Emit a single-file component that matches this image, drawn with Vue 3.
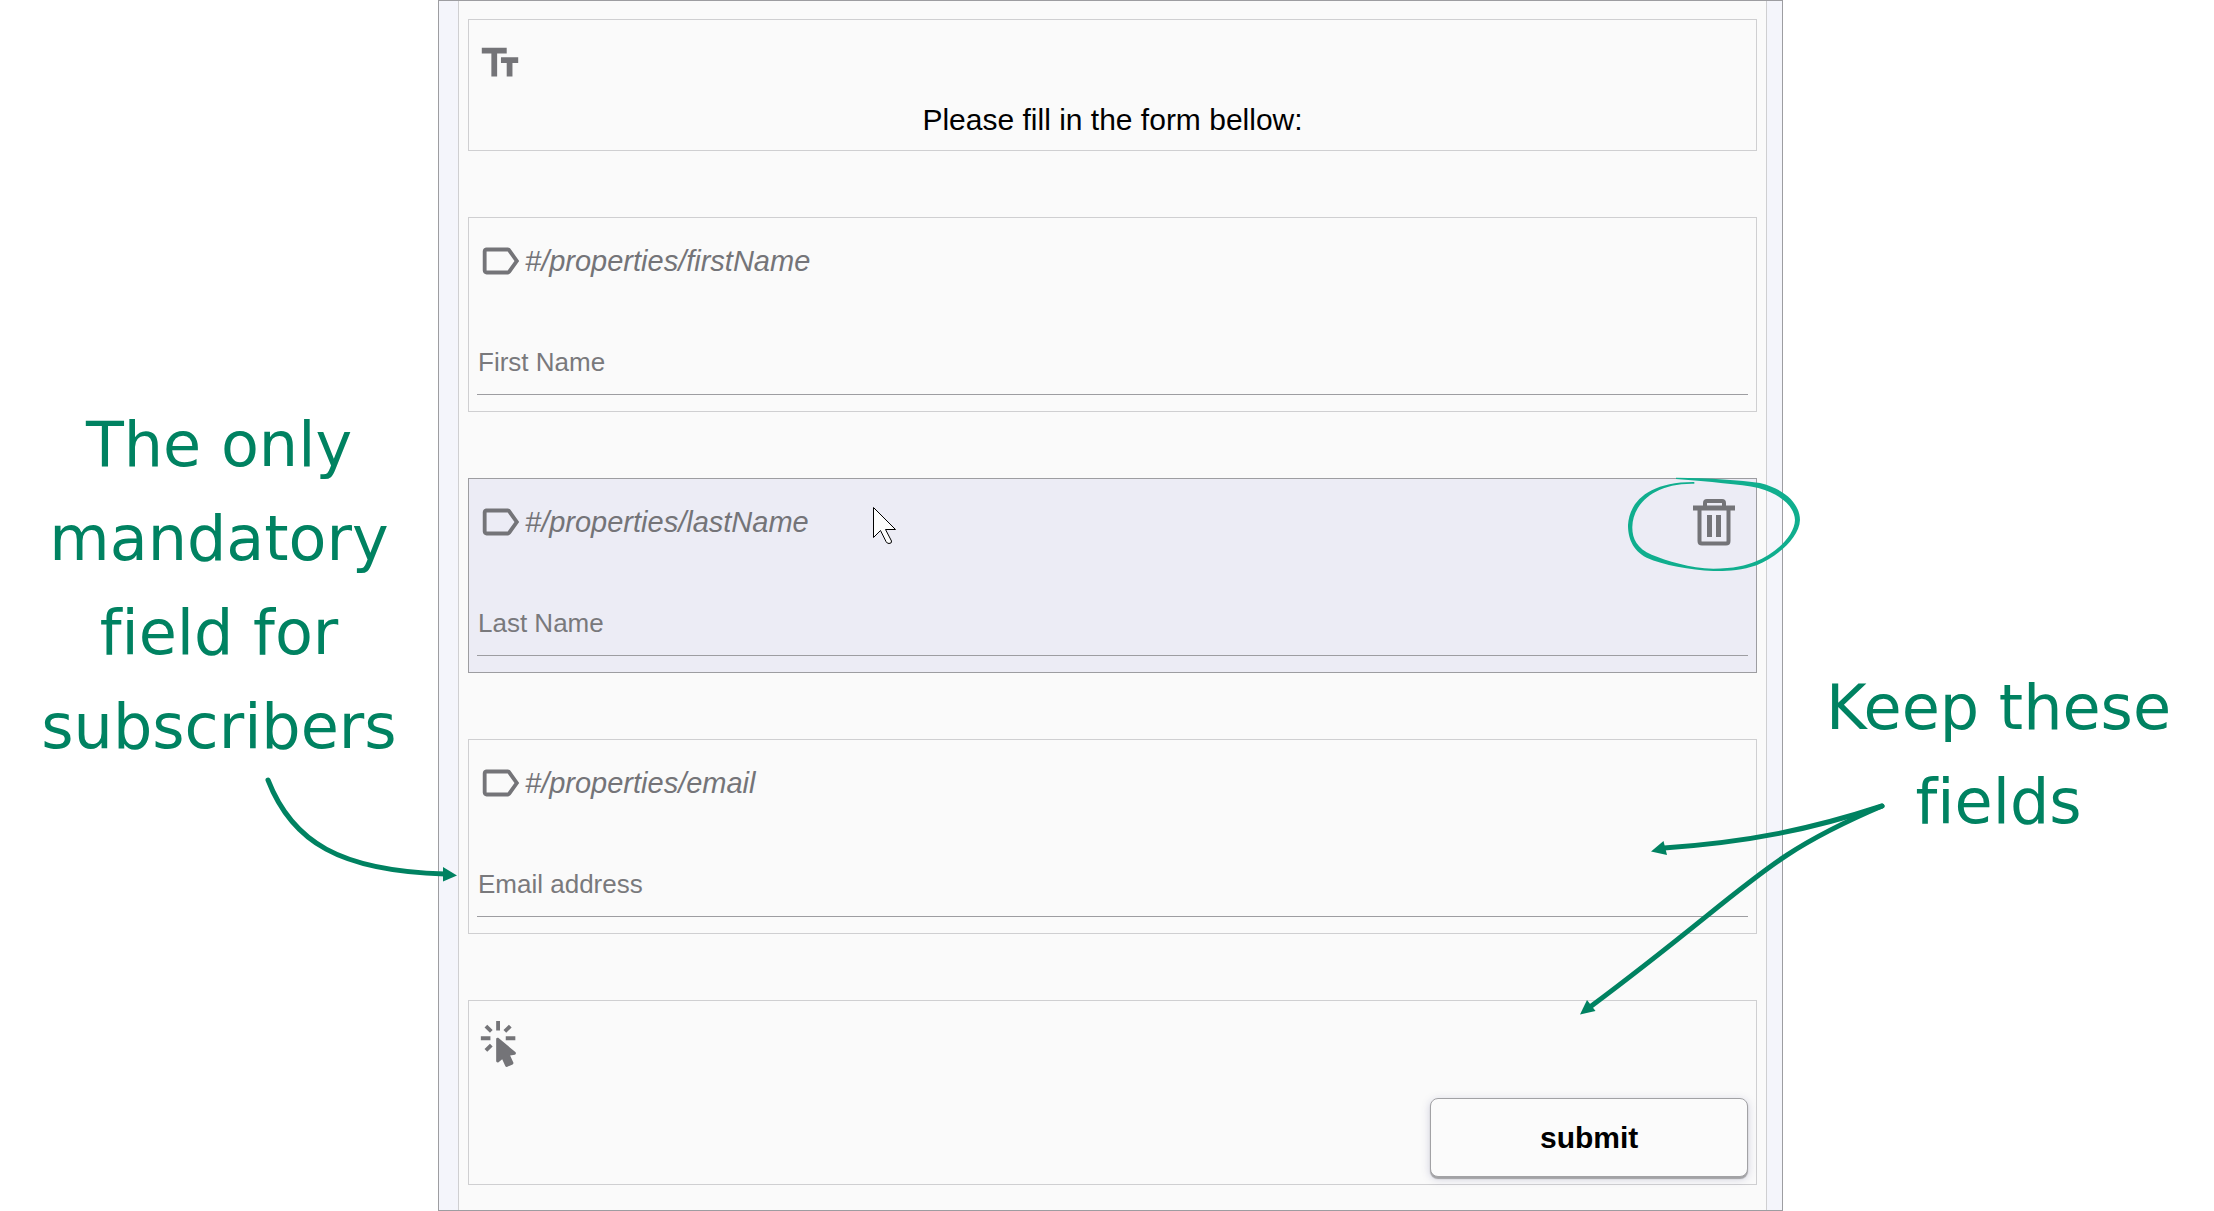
<script setup>
import { reactive } from 'vue'

const fields = reactive([
  { id: 'firstName', path: '#/properties/firstName', label: 'First Name', value: '', active: false },
  { id: 'lastName', path: '#/properties/lastName', label: 'Last Name', value: '', active: true },
  { id: 'email', path: '#/properties/email', label: 'Email address', value: '', active: false },
])
</script>

<template>
  <main class="stage">
    <aside class="note note-left">
      <p>The only<br />mandatory<br />field for<br />subscribers</p>
    </aside>

    <section class="frame">
      <form class="panel" @submit.prevent>
        <div class="card">
          <div class="card-head">
            <svg class="icon" viewBox="0 0 24 24" aria-hidden="true">
              <path d="M2.5 4v3h5v12h3V7h5V4h-13zm19 5h-9v3h3v7h3v-7h3V9z" />
            </svg>
          </div>
          <p class="intro">Please fill in the form bellow:</p>
        </div>

        <div v-for="field in fields" :key="field.id" class="card" :class="{ active: field.active }">
          <div class="card-head">
            <svg class="icon" viewBox="0 0 24 24" aria-hidden="true">
              <path
                d="M17.63 5.84C17.27 5.33 16.67 5 16 5L5 5.01C3.9 5.01 3 5.9 3 7v10c0 1.1.9 1.99 2 1.99L16 19c.67 0 1.27-.33 1.63-.84L22 12l-4.37-6.16zM16 17H5V7h11l3.55 5L16 17z"
              />
            </svg>
            <label class="path" :for="field.id">{{ field.path }}</label>
            <button v-if="field.active" class="remove" type="button" aria-label="Delete field">
              <svg viewBox="0 0 44 48" aria-hidden="true">
                <g fill="none" stroke="currentColor" stroke-width="4">
                  <path d="M1 10H43" stroke-width="5" />
                  <path d="M13 9V5Q13 3 15 3H30Q32 3 32 5V9" />
                  <path d="M7.500 11V43Q7.500 45.500 10 45.500H34Q36.500 45.500 36.500 43V11" />
                  <path d="M17.500 17V39M26.500 17V39" stroke-width="5" />
                </g>
              </svg>
            </button>
          </div>
          <input
            :id="field.id"
            v-model="field.value"
            class="field"
            type="text"
            :placeholder="field.label"
          />
        </div>

        <div class="card">
          <div class="card-head">
            <svg class="icon" viewBox="0 0 24 24" aria-hidden="true">
              <path
                d="M10.76,8.69A0.76,0.76 0 0,0 10,9.45V20.9C10,21.32 10.34,21.66 10.76,21.66C10.95,21.66 11.11,21.6 11.24,21.5L13.15,19.95L14.81,23.57C14.94,23.84 15.21,24 15.5,24C15.61,24 15.72,24 15.83,23.92L18.59,22.64C18.97,22.46 19.15,22 18.95,21.63L17.28,18L19.69,17.55C19.85,17.5 20,17.43 20.12,17.29C20.39,16.97 20.35,16.5 20,16.21L11.26,8.86L11.25,8.87C11.12,8.76 10.95,8.69 10.76,8.69M15,10V8H20V10H15M13.83,4.76L16.66,1.93L18.07,3.34L15.24,6.17L13.83,4.76M10,0H12V5H10V0M3.93,14.66L6.76,11.83L8.17,13.24L5.34,16.07L3.93,14.66M3.93,3.34L5.34,1.93L8.17,4.76L6.76,6.17L3.93,3.34M7,10H2V8H7V10"
              />
            </svg>
          </div>
          <button class="submit" type="submit">submit</button>
        </div>
      </form>
    </section>

    <aside class="note note-right">
      <p>Keep these<br />fields</p>
    </aside>

    <svg class="overlay" viewBox="0 0 2214 1211" aria-hidden="true">
      <path
        class="ring"
        transform="translate(1600 460) scale(0.3333)"
        d="M228 53C330 54 420 60 480 69C560 89 600 135 600 180C598 235 530 290 470 316C420 333 370 334 340 333C270 330 190 315 140 293C95 270 84 230 84 195C88 130 140 65 283 66L283 71C160 68 98 135 97 200C96 235 110 265 155 284C200 302 270 325 340 326C400 326 440 315 465 305C530 280 584 225 585 180C584 145 550 105 475 84C420 72 330 66 228 57Z"
      />
      <g class="arrow-line">
        <path d="M268 780C292 842 340 871 445 874" />
        <path d="M1882 806C1812 829 1750 842 1664 848" />
        <path d="M1882 806C1760 858 1755 884 1590 1007" />
      </g>
      <g class="arrow-head">
        <path d="M457 875.500L443 867V881.500Z" />
        <path d="M1651 851.500L1663.500 841L1667 855Z" />
        <path d="M1580 1014.500L1587 1000L1595.500 1011Z" />
      </g>
      <path
        class="pointer"
        d="M873.500 507.500V537.500L880.500 530.500L886 541.500Q887 543.500 889 543.500Q892 543.500 891.500 541L885.500 529.500H895.500Z"
      />
    </svg>
  </main>
</template>

<style>
body {
  margin: 0;
  background: #ffffff;
}
</style>

<style scoped>
.stage {
  position: relative;
  display: grid;
  grid-template-columns: 438fr 1345fr 431fr;
  font-family: "Liberation Sans", Arial, sans-serif;
}

.note {
  color: #008261;
  font-family: "DejaVu Sans", sans-serif;
  font-size: 62px;
  font-variant-ligatures: none;
  line-height: 94px;
  text-align: center;
  white-space: nowrap;
}

.note p {
  margin: 0;
}

.note-left {
  padding-top: 398px;
}

.note-right {
  padding-top: 661px;
}

.frame {
  box-sizing: border-box;
  padding: 0 15px 0 19px;
  border: 1px solid #9d9da1;
  background: #f4f5fb;
}

.panel {
  display: flex;
  flex-direction: column;
  gap: 66px;
  padding: 18px 9px 25px;
  border: solid #cfcfd1;
  border-width: 0 1px;
  background: #fafafa;
}

.card {
  display: flex;
  flex-direction: column;
  padding: 20px 8px 16px;
  border: 1px solid #cfcfd1;
}

.card:first-child {
  padding-bottom: 12px;
}

.card:last-child {
  padding-bottom: 7px;
}

.card.active {
  border-color: #9d9da1;
  background: #ececf5;
}

.card-head {
  display: flex;
  align-items: center;
  gap: 2px;
  height: 46px;
  color: #747478;
}

.icon {
  width: 46px;
  height: 46px;
  fill: currentColor;
}

.path {
  font-size: 29px;
  font-style: italic;
}

.remove {
  margin: 0 12px 0 auto;
  padding: 0;
  border: 0;
  background: none;
  color: #747478;
}

.remove svg {
  display: block;
  width: 44px;
  height: 48px;
}

.intro {
  margin: 16px 0 0;
  color: #000000;
  font-size: 30px;
  line-height: 36px;
  text-align: center;
}

.field {
  box-sizing: border-box;
  width: 100%;
  height: 64px;
  margin-top: 47px;
  padding: 0 1px;
  border: 0;
  border-bottom: 1px solid #9d9da1;
  border-radius: 0;
  outline: 0;
  background: transparent;
  color: #000000;
  font-family: inherit;
  font-size: 26px;
}

.field::placeholder {
  color: #79797c;
  opacity: 1;
}

.submit {
  align-self: flex-end;
  width: 25%;
  height: 79px;
  margin-top: 31px;
  border: 1px solid #a2a2a5;
  border-radius: 8px;
  background: #fbfbfb;
  box-shadow: 0 2px 1px #a2a2a5, 0 2px 8px rgba(80, 80, 140, 0.25);
  color: #000000;
  font-family: inherit;
  font-size: 30px;
  font-weight: 700;
}

.overlay {
  position: absolute;
  top: 0;
  left: 0;
  width: 100%;
  height: auto;
  pointer-events: none;
}

.ring {
  fill: #10ae8e;
}

.arrow-line {
  fill: none;
  stroke: #008261;
  stroke-width: 5;
  stroke-linecap: round;
}

.arrow-head {
  fill: #008261;
}

.pointer {
  fill: #fcfcfc;
  stroke: #000000;
  stroke-width: 1;
}
</style>
